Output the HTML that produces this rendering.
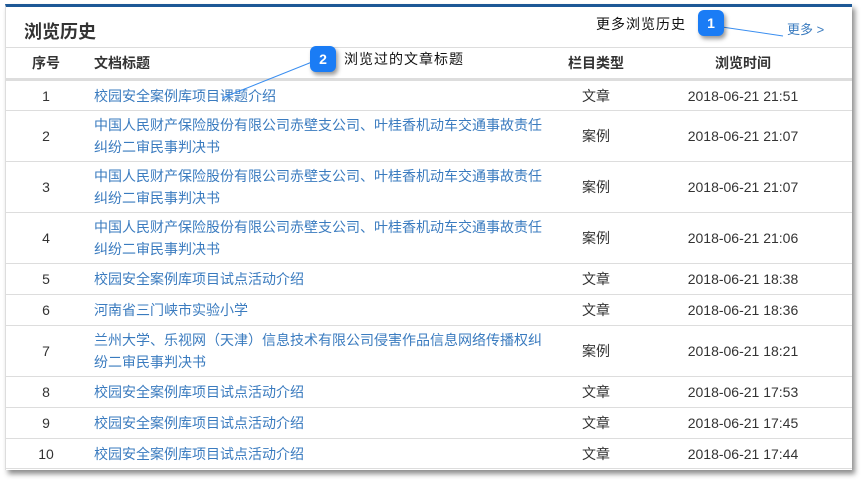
<!DOCTYPE html>
<html><head><meta charset="utf-8"><style>
*{margin:0;padding:0;box-sizing:border-box}
body{width:868px;height:484px;background:#fff;font-family:"Liberation Sans","Noto Sans CJK SC",sans-serif;position:relative;overflow:hidden;color:#333}
.panel{position:absolute;left:5px;top:4px;width:847px;height:466px;background:#fff;border-top:3px solid #1d5896;box-shadow:3px 4px 5px rgba(0,0,0,.45);border-left:1px solid #ddd}
.ttl{position:absolute;left:24px;top:18px;font-size:18px;font-weight:bold;color:#333}
.more{position:absolute;left:787px;top:19px;font-size:13px;color:#3a7bbf}
.row{position:absolute;left:5px;width:847px;border-top:1px solid #ddd;font-size:14px}
.row div{position:absolute;top:0;height:100%;display:flex;align-items:center}
.c1{left:0;width:82px;justify-content:center}
.c2{left:89px;width:452px;color:#3a7bbf;line-height:22px}
.c3{left:551px;width:80px;justify-content:center}
.c4{left:660px;width:156px;justify-content:center}
.hd{font-weight:bold;border-bottom:2px solid #ddd}
.hd .c2{color:#333}
.badge{position:absolute;width:26px;height:26px;border-radius:6px;background:#1a7cf5;color:#fff;font-size:14px;font-weight:bold;display:flex;align-items:center;justify-content:center;box-shadow:2px 3px 4px rgba(0,0,0,.4)}
.note{position:absolute;font-size:14px;color:#111;letter-spacing:1px}
</style></head><body>
<div class="panel"></div>
<div class="ttl">浏览历史</div>
<div class="more">更多 &gt;</div>
<div class="row hd" style="top:47px;height:33px"><div class="c1">序号</div><div class="c2">文档标题</div><div class="c3">栏目类型</div><div class="c4">浏览时间</div></div>
<div class="row" style="top:80px;height:30px"><div class="c1">1</div><div class="c2">校园安全案例库项目课题介绍</div><div class="c3">文章</div><div class="c4">2018-06-21 21:51</div></div>
<div class="row" style="top:110px;height:51px"><div class="c1">2</div><div class="c2">中国人民财产保险股份有限公司赤壁支公司、叶桂香机动车交通事故责任纠纷二审民事判决书</div><div class="c3">案例</div><div class="c4">2018-06-21 21:07</div></div>
<div class="row" style="top:161px;height:51px"><div class="c1">3</div><div class="c2">中国人民财产保险股份有限公司赤壁支公司、叶桂香机动车交通事故责任纠纷二审民事判决书</div><div class="c3">案例</div><div class="c4">2018-06-21 21:07</div></div>
<div class="row" style="top:212px;height:51px"><div class="c1">4</div><div class="c2">中国人民财产保险股份有限公司赤壁支公司、叶桂香机动车交通事故责任纠纷二审民事判决书</div><div class="c3">案例</div><div class="c4">2018-06-21 21:06</div></div>
<div class="row" style="top:263px;height:31px"><div class="c1">5</div><div class="c2">校园安全案例库项目试点活动介绍</div><div class="c3">文章</div><div class="c4">2018-06-21 18:38</div></div>
<div class="row" style="top:294px;height:31px"><div class="c1">6</div><div class="c2">河南省三门峡市实验小学</div><div class="c3">文章</div><div class="c4">2018-06-21 18:36</div></div>
<div class="row" style="top:325px;height:51px"><div class="c1">7</div><div class="c2">兰州大学、乐视网（天津）信息技术有限公司侵害作品信息网络传播权纠纷二审民事判决书</div><div class="c3">案例</div><div class="c4">2018-06-21 18:21</div></div>
<div class="row" style="top:376px;height:31px"><div class="c1">8</div><div class="c2">校园安全案例库项目试点活动介绍</div><div class="c3">文章</div><div class="c4">2018-06-21 17:53</div></div>
<div class="row" style="top:407px;height:31px"><div class="c1">9</div><div class="c2">校园安全案例库项目试点活动介绍</div><div class="c3">文章</div><div class="c4">2018-06-21 17:45</div></div>
<div class="row" style="top:438px;height:31px;border-bottom:1px solid #ddd"><div class="c1">10</div><div class="c2">校园安全案例库项目试点活动介绍</div><div class="c3">文章</div><div class="c4">2018-06-21 17:44</div></div>
<svg style="position:absolute;left:0;top:0" width="868" height="484"><line x1="722" y1="27" x2="783" y2="36" stroke="#3a8ef0" stroke-width="1"/><line x1="312" y1="62" x2="222" y2="98" stroke="#3a8ef0" stroke-width="1"/></svg>
<div class="badge" style="left:698px;top:10px">1</div>
<div class="note" style="left:596px;top:14px">更多浏览历史</div>
<div class="badge" style="left:310px;top:46px">2</div>
<div class="note" style="left:344px;top:49px">浏览过的文章标题</div>
</body></html>
